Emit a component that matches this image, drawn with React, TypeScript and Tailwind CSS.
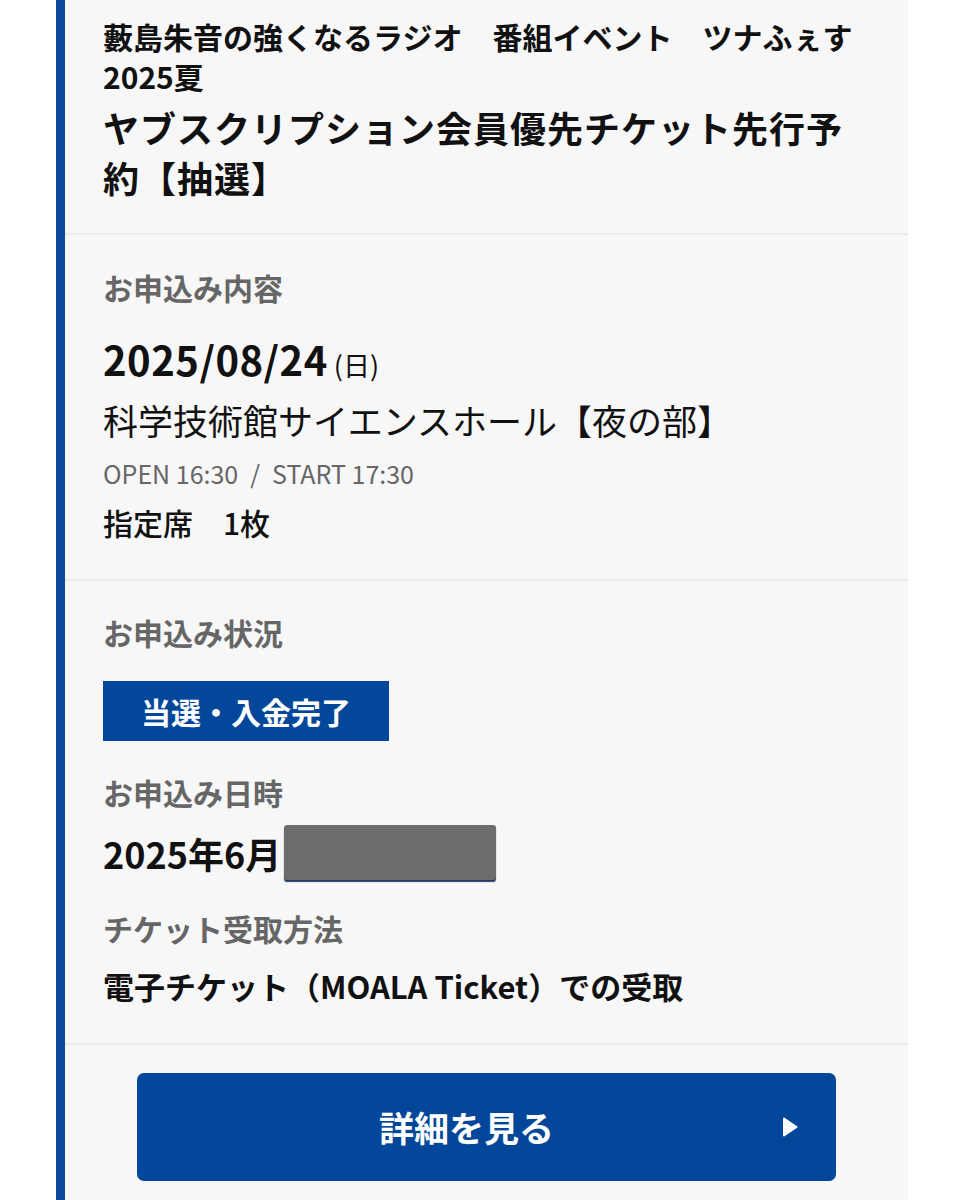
import type { ReactNode } from "react";

const FONT = "font-['Noto_Sans_CJK_JP','Noto_Sans',sans-serif]";

function Label({ children, className = "" }: { children: ReactNode; className?: string }) {
  return (
    <div className={`text-[30px] leading-[40px] font-bold text-[#666666] ${className}`}>
      {children}
    </div>
  );
}

function Divider() {
  return <div className="h-[2px] w-full bg-[#ebebeb]" />;
}

export default function App() {
  return (
    <div className={`flex h-[1200px] w-[964px] overflow-hidden bg-white ${FONT}`}>
      <div className="w-[56px] shrink-0" />
      <div className="flex w-[852px] shrink-0 flex-col border-l-[9px] border-[#0a4a9c] bg-[#f7f7f7] text-[#111111]">
        {/* header */}
        <div className="px-[38px] pb-[31px] pt-[16px]">
          <h2 className="text-[30px] font-bold leading-[40px]">
            藪島朱音の強くなるラジオ　番組イベント　ツナふぇす 2025夏
          </h2>
          <h1 className="mt-[6px] text-[36px] font-bold leading-[50px] tracking-[1px]">
            ヤブスクリプション会員優先チケット先行予約【抽選】
          </h1>
        </div>
        <Divider />

        {/* application details */}
        <div className="px-[38px] pb-[37px] pt-[32px]">
          <Label>お申込み内容</Label>
          <div className="mt-[27px] flex h-[50px] items-center">
            <span className="leading-none">
              <span className="text-[40px] font-bold tracking-[0.5px]">2025/08/24</span>
              <span className="ml-[6px] text-[27px]">(日)</span>
            </span>
          </div>
          <div className="mt-[12px] text-[35px] leading-[48px]">
            科学技術館サイエンスホール【夜の部】
          </div>
          <div className="mt-[11px] text-[25px] leading-[36px] text-[#666666]">
            OPEN 16:30<span className="mx-[12px]">/</span>START 17:30
          </div>
          <div className="mt-[11px] text-[30px] font-medium leading-[40px]">指定席　1枚</div>
        </div>
        <Divider />

        {/* status */}
        <div className="px-[38px] pb-[37px] pt-[31px]">
          <Label>お申込み状況</Label>
          <div className="mt-[29px] flex h-[60px] w-[286px] items-center justify-center bg-[#03479a] text-[30px] font-bold text-white">
            当選・入金完了
          </div>
          <Label className="mt-[31px]">お申込み日時</Label>
          <div className="mt-[13px] flex items-center">
            <span className="text-[36px] font-bold leading-[44px]">2025年6月</span>
            <span className="ml-[3px] h-[55px] w-[212px] rounded-[3px] bg-[#6c6c6c] shadow-[0_2px_1px_#2a3a66]" />
          </div>
          <Label className="mt-[28px]">チケット受取方法</Label>
          <div className="mt-[18px] text-[31px] font-bold leading-[40px]">
            電子チケット（MOALA Ticket）での受取
          </div>
        </div>
        <Divider />

        {/* button */}
        <div className="px-[72px] pt-[28px]">
          <button
            type="button"
            className="relative flex h-[108px] w-full items-center justify-center rounded-[7px] bg-[#03479a] pr-[40px] text-[35px] font-bold text-white"
          >
            <span>詳細を見る</span>
            <svg
              className="absolute right-[38px] top-1/2 h-[20px] w-[16px] -translate-y-1/2"
              viewBox="0 0 16 20"
            >
              <path d="M2 1.5 L14.5 10 L2 18.5 Z" fill="white" stroke="white" strokeWidth="2" strokeLinejoin="round" />
            </svg>
          </button>
        </div>
      </div>
    </div>
  );
}
